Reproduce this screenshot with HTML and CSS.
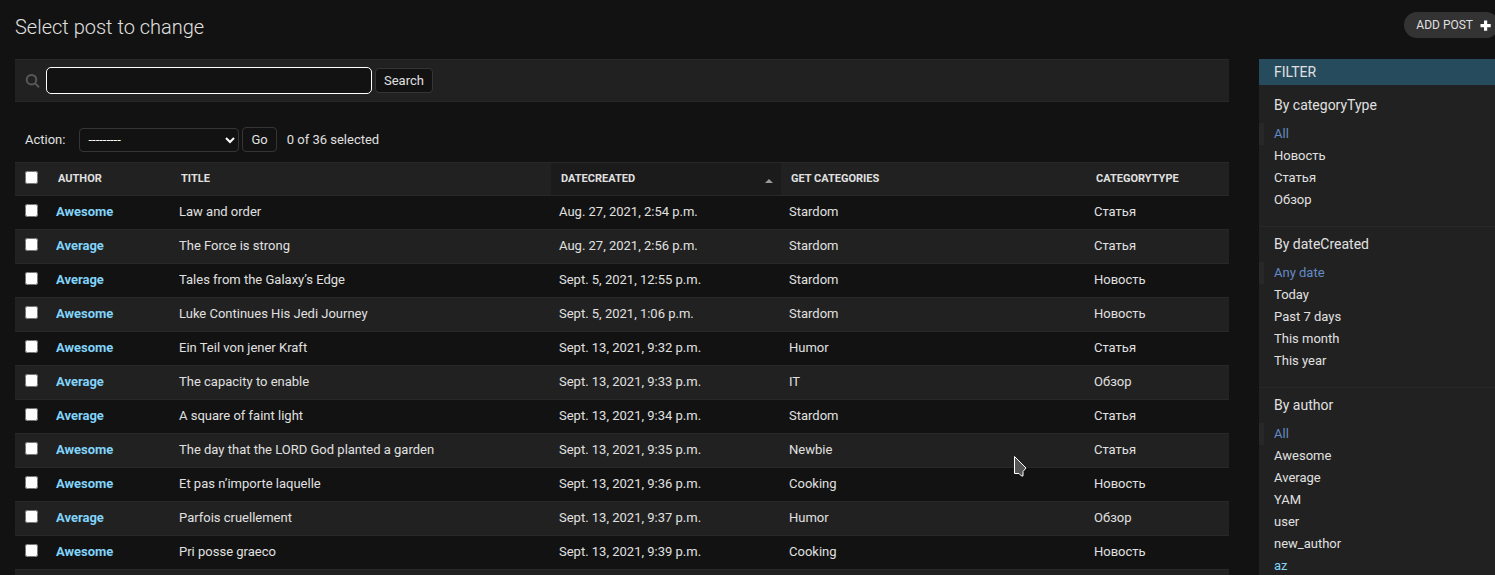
FILE: index.html
```html
<!DOCTYPE html>
<html lang="en">
<head>
<meta charset="utf-8">
<title>Select post to change</title>
<link rel="stylesheet" href="styles.css">
</head>
<body>
<main class="content">
  <header class="page-header">
    <h1 class="page-title">Select post to change</h1>
    <a class="add-link" href="#">ADD POST
      <svg class="plus-icon" viewBox="0 0 11 11" aria-hidden="true"><path d="M4 .5h3.200V4h3.500v3.200H7.200v3.500H4V7.200H.5V4H4z"/></svg>
    </a>
  </header>
  <div class="changelist">
    <section class="results">
      <form class="toolbar">
        <label for="searchbar" aria-label="Search posts"><svg class="search-icon" viewBox="0 0 15 15" aria-hidden="true"><circle cx="6.500" cy="6.700" r="4.800"/><path d="M10 10.200l4 4"/></svg></label>
        <input class="search-input" id="searchbar" type="text">
        <button class="button" type="button">Search</button>
      </form>
      <div class="actions">
        <label for="action">Action:</label>
        <select class="action-select" id="action"><option>---------</option></select>
        <button class="button go" type="button">Go</button>
        <span class="counter">0 of 36 selected</span>
      </div>
      <table class="result-list">
        <colgroup><col class="col-check"><col class="col-author"><col class="col-title"><col class="col-date"><col class="col-categories"><col class="col-type"></colgroup>
        <thead>
          <tr>
            <th class="check"><input type="checkbox" aria-label="Select all"></th>
            <th>AUTHOR</th><th>TITLE</th>
            <th class="sorted"><div class="sort-head">DATECREATED<span class="sort-arrow"></span></div></th>
            <th>GET CATEGORIES</th><th>CATEGORYTYPE</th>
          </tr>
        </thead>
        <tbody>
          <tr><td class="check"><input type="checkbox" aria-label="Select post"></td><td><a class="author" href="#">Awesome</a></td><td>Law and order</td><td>Aug. 27, 2021, 2:54 p.m.</td><td>Stardom</td><td>Статья</td></tr>
          <tr><td class="check"><input type="checkbox" aria-label="Select post"></td><td><a class="author" href="#">Average</a></td><td>The Force is strong</td><td>Aug. 27, 2021, 2:56 p.m.</td><td>Stardom</td><td>Статья</td></tr>
          <tr><td class="check"><input type="checkbox" aria-label="Select post"></td><td><a class="author" href="#">Average</a></td><td>Tales from the Galaxy’s Edge</td><td>Sept. 5, 2021, 12:55 p.m.</td><td>Stardom</td><td>Новость</td></tr>
          <tr><td class="check"><input type="checkbox" aria-label="Select post"></td><td><a class="author" href="#">Awesome</a></td><td>Luke Continues His Jedi Journey</td><td>Sept. 5, 2021, 1:06 p.m.</td><td>Stardom</td><td>Новость</td></tr>
          <tr><td class="check"><input type="checkbox" aria-label="Select post"></td><td><a class="author" href="#">Awesome</a></td><td>Ein Teil von jener Kraft</td><td>Sept. 13, 2021, 9:32 p.m.</td><td>Humor</td><td>Статья</td></tr>
          <tr><td class="check"><input type="checkbox" aria-label="Select post"></td><td><a class="author" href="#">Average</a></td><td>The capacity to enable</td><td>Sept. 13, 2021, 9:33 p.m.</td><td>IT</td><td>Обзор</td></tr>
          <tr><td class="check"><input type="checkbox" aria-label="Select post"></td><td><a class="author" href="#">Average</a></td><td>A square of faint light</td><td>Sept. 13, 2021, 9:34 p.m.</td><td>Stardom</td><td>Статья</td></tr>
          <tr><td class="check"><input type="checkbox" aria-label="Select post"></td><td><a class="author" href="#">Awesome</a></td><td>The day that the LORD God planted a garden</td><td>Sept. 13, 2021, 9:35 p.m.</td><td>Newbie</td><td>Статья</td></tr>
          <tr><td class="check"><input type="checkbox" aria-label="Select post"></td><td><a class="author" href="#">Awesome</a></td><td>Et pas n’importe laquelle</td><td>Sept. 13, 2021, 9:36 p.m.</td><td>Cooking</td><td>Новость</td></tr>
          <tr><td class="check"><input type="checkbox" aria-label="Select post"></td><td><a class="author" href="#">Average</a></td><td>Parfois cruellement</td><td>Sept. 13, 2021, 9:37 p.m.</td><td>Humor</td><td>Обзор</td></tr>
          <tr><td class="check"><input type="checkbox" aria-label="Select post"></td><td><a class="author" href="#">Awesome</a></td><td>Pri posse graeco</td><td>Sept. 13, 2021, 9:39 p.m.</td><td>Cooking</td><td>Новость</td></tr>
          <tr><td colspan="6">&nbsp;</td></tr>
        </tbody>
      </table>
    </section>
    <nav class="filter">
      <h2 class="filter-title">FILTER</h2>
      <h3 class="filter-name">By categoryType</h3>
      <ul class="filter-list">
        <li class="selected"><a href="#">All</a></li><li><a href="#">Новость</a></li><li><a href="#">Статья</a></li><li><a href="#">Обзор</a></li>
      </ul>
      <h3 class="filter-name">By dateCreated</h3>
      <ul class="filter-list">
        <li class="selected"><a href="#">Any date</a></li><li><a href="#">Today</a></li><li><a href="#">Past 7 days</a></li><li><a href="#">This month</a></li><li><a href="#">This year</a></li>
      </ul>
      <h3 class="filter-name">By author</h3>
      <ul class="filter-list">
        <li class="selected"><a href="#">All</a></li><li><a href="#">Awesome</a></li><li><a href="#">Average</a></li><li><a href="#">YAM</a></li><li><a href="#">user</a></li><li><a href="#">new_author</a></li><li class="hovered"><a href="#">az</a></li>
      </ul>
    </nav>
  </div>
</main>
<svg class="pointer" viewBox="0 0 14 22" aria-hidden="true"><path d="M1.500 1.500v17h4.500l2.500 2.500h1.500v-4.500l3-3.500z"/></svg>
</body>
</html>
```
FILE: styles.css
```css
:root {
  --bg: #121212;
  --panel: #212121;
  --line: #282828;
  --control-line: #353535;
  --text: #e0e0e0;
  --link: #81d4fa;
}
* { box-sizing: border-box; }
body {
  margin: 0;
  height: 100vh;
  overflow: hidden;
  background: var(--bg);
  color: var(--text);
  font: 13px/18px Roboto, "Liberation Sans", sans-serif;
}
a { color: inherit; text-decoration: none; }
/* The content column runs slightly past the right window edge. */
.content { margin-right: -4px; padding: 12px 0 0 15px; }
.page-header {
  display: flex;
  justify-content: space-between;
  align-items: flex-start;
  height: 47px;
}
.page-title { margin: 0; font-size: 20px; line-height: 30px; font-weight: 300; }
.add-link {
  display: flex;
  align-items: center;
  gap: 7px;
  height: 26px;
  padding: 0 8px 0 12px;
  border-radius: 15px;
  background: #333;
  font-size: 12px;
}
.plus-icon { width: 11px; height: 11px; fill: #fff; }
.changelist {
  display: grid;
  grid-template-columns: minmax(0, 1fr) 240px;
  gap: 30px;
}
.toolbar {
  display: flex;
  align-items: center;
  gap: 3px;
  height: 43px;
  padding: 0 10px;
  background: var(--panel);
  border-top: 1px solid var(--line);
  border-bottom: 1px solid var(--line);
}
.search-icon {
  display: block;
  width: 15px;
  height: 15px;
  margin-right: 3px;
  fill: none;
  stroke: #585858;
  stroke-width: 2;
}
.search-input {
  width: 326px;
  height: 27px;
  padding: 2px 5px;
  border: 1px solid #fff;
  border-radius: 5px;
  outline: 0;
  background: var(--bg);
  color: var(--text);
  font: inherit;
}
.button {
  height: 25px;
  padding: 0 8px;
  border: 1px solid var(--control-line);
  border-radius: 4px;
  background: var(--bg);
  color: var(--text);
  font: inherit;
}
.actions {
  display: flex;
  align-items: center;
  gap: 3px;
  padding: 25px 10px 10px;
}
.action-select {
  width: 160px;
  height: 24px;
  margin-left: 11px;
  padding: 0 4px;
  border: 1px solid var(--control-line);
  border-radius: 4px;
  background: var(--bg);
  color: #fff;
  font: inherit;
}
.counter { margin-left: 7px; }
.result-list {
  width: 100%;
  table-layout: fixed;
  border-collapse: collapse;
}
.col-check { width: 33px; }
.col-author { width: 123px; }
.col-title { width: auto; }
.col-date { width: 230px; }
.col-categories { width: 305px; }
.col-type { width: 143px; }
.result-list th {
  height: 33px;
  padding: 0 10px;
  background: var(--panel);
  border-top: 1px solid var(--line);
  border-bottom: 1px solid var(--line);
  font-size: 11px;
  font-weight: 700;
  text-align: left;
}
.result-list th.sorted { background: #1b1b1b; }
.sort-head { display: flex; justify-content: space-between; align-items: center; }
.sort-arrow {
  margin: 4px -2px 0 0;
  border: 4px solid transparent;
  border-top: 0;
  border-bottom: 4px solid #999;
}
.result-list td {
  height: 34px;
  padding: 0 8px 2px;
  border-bottom: 1px solid var(--line);
}
.result-list tbody tr:nth-child(even) { background: var(--panel); }
.result-list .check { padding: 8px 0 0 10px; vertical-align: top; }
.check input { display: block; margin: 0; }
.author { color: var(--link); font-weight: 700; }
.filter { background: var(--panel); }
.filter-title {
  margin: 0 0 11px;
  padding: 4px 15px;
  background: #264b5d;
  font-size: 14px;
  font-weight: 400;
}
.filter-name { margin: 0; padding: 0 15px; font-size: 14px; font-weight: 400; }
.filter-list {
  margin: 9px 0 8px;
  padding: 0 0 15px;
  border-bottom: 1px solid var(--line);
  list-style: none;
}
.filter-list:last-child { border-bottom: 0; }
.filter-list li { padding: 2px 15px; }
.filter-list .selected {
  padding-left: 10px;
  border-left: 5px solid var(--line);
  color: #648bc6;
}
.filter-list .hovered { color: var(--link); }
.pointer {
  position: absolute;
  left: 1013px;
  top: 455px;
  width: 14px;
  height: 22px;
  fill: #555;
  stroke: #fff;
}
```
